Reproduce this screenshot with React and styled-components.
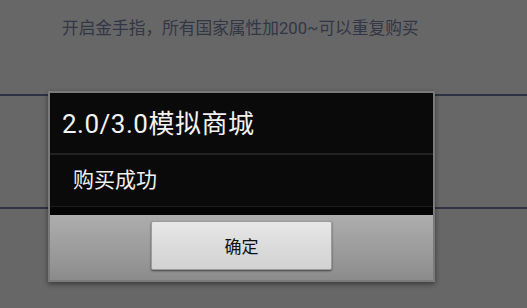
import styled, { createGlobalStyle } from 'styled-components';

const GlobalStyle = createGlobalStyle`
	html, body {
		margin: 0;
		padding: 0;
		background: #676767;
	}
	* {
		box-sizing: border-box;
	}
`;

function App() {
	return (
		<Page>
			<GlobalStyle />
			<List>
				<Item height={94}>
					<ItemText>开启金手指，所有国家属性加200~可以重复购买</ItemText>
				</Item>
				<Divider />
				<Item height={111} />
				<Divider />
				<Item height={99} />
			</List>

			<Dialog>
				<TitleBar>
					<Title>2.0/3.0模拟商城</Title>
				</TitleBar>
				<Message>
					<MessageText>购买成功</MessageText>
				</Message>
				<ButtonBar>
					<OkButton>确定</OkButton>
				</ButtonBar>
			</Dialog>
		</Page>
	);
}

const Page = styled.div`
	position: relative;
	width: 527px;
	height: 308px;
	overflow: hidden;
	background: #676767;
	font-family: 'Roboto', 'Noto Sans CJK SC', sans-serif;
`;

const List = styled.div`
	display: flex;
	flex-direction: column;
`;

const Item = styled.div`
	display: flex;
	align-items: flex-start;
	height: ${(props) => props.height}px;
	padding: 0 0 0 62px;
`;

const ItemText = styled.p`
	margin: 17px 0 0;
	font-size: 16.7px;
	line-height: 24px;
	color: #323645;
	white-space: nowrap;
`;

const Divider = styled.div`
	height: 2px;
	background: #2e3243;
`;

const Dialog = styled.div`
	position: absolute;
	left: 48px;
	top: 91px;
	width: 387px;
	height: 191px;
	display: flex;
	flex-direction: column;
	border: 2px solid #7a7a7a;
	background: #0a0a0a;
	box-shadow: 0 2px 5px rgba(0, 0, 0, 0.45);
`;

const TitleBar = styled.div`
	display: flex;
	align-items: center;
	height: 62px;
	padding: 2px 0 0 12px;
	border-bottom: 2px solid #222222;
`;

const Title = styled.h1`
	margin: 0;
	font-size: 26px;
	font-weight: 400;
	line-height: 30px;
	letter-spacing: 0.5px;
	color: #f2f2f2;
	white-space: nowrap;
`;

const Message = styled.div`
	position: relative;
	display: flex;
	align-items: center;
	height: 60px;
	padding: 0 0 11px 23px;
	box-shadow: inset 0 -8px 0 #050505;

	&::after {
		content: '';
		position: absolute;
		left: 0;
		right: 0;
		bottom: 8px;
		height: 1px;
		background: #1c1c1c;
	}
`;

const MessageText = styled.p`
	margin: 0;
	font-size: 21px;
	line-height: 26px;
	color: #f0f0f0;
`;

const ButtonBar = styled.div`
	flex: 1;
	display: flex;
	justify-content: center;
	align-items: flex-start;
	padding-top: 6px;
	background: linear-gradient(180deg, #adadad 0%, #9a9a9a 60%, #8b8b8b 100%);
`;

const OkButton = styled.button`
	width: 181px;
	height: 49px;
	padding: 0;
	border: 1px solid #9c9c9c;
	border-radius: 2px;
	background: linear-gradient(180deg, #e8e8e8 0%, #dcdcdc 50%, #d2d2d2 100%);
	box-shadow: 0 1px 2px rgba(0, 0, 0, 0.55);
	font-family: 'Roboto', 'Noto Sans CJK SC', sans-serif;
	font-size: 17px;
	color: #111111;
	cursor: pointer;
`;

export default App;
